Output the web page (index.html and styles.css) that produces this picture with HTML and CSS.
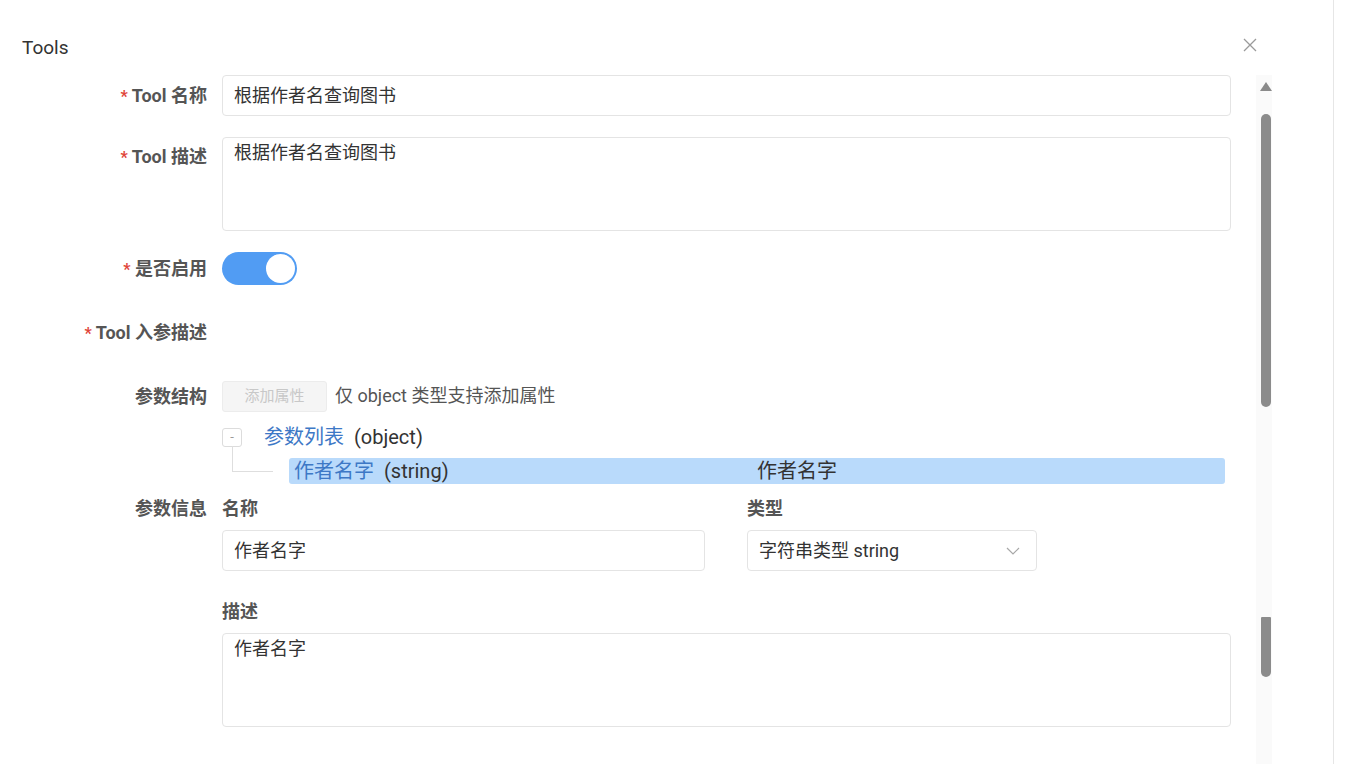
FILE: index.html
```html
<!DOCTYPE html>
<html lang="zh">
<head>
<meta charset="utf-8">
<title>Tools</title>
<link rel="stylesheet" href="styles.css">
</head>
<body>
<div class="modal">
  <header class="head">
    <span class="title">Tools</span>
    <span class="close">
      <svg width="14" height="14" viewBox="0 0 14 14"><path d="M1 1L13 13M13 1L1 13" stroke="#9a9a9a" stroke-width="1.3" fill="none"/></svg>
    </span>
  </header>
  <div class="body">
    <div class="form">
      <div class="row r-name">
        <div class="label lh41"><span class="req">*</span> Tool 名称</div>
        <div class="ctrl"><div class="input">根据作者名查询图书</div></div>
      </div>
      <div class="row r-desc">
        <div class="label pt8"><span class="req">*</span> Tool 描述</div>
        <div class="ctrl"><div class="textarea">根据作者名查询图书</div></div>
      </div>
      <div class="row r-switch">
        <div class="label lh33"><span class="req">*</span> 是否启用</div>
        <div class="ctrl"><div class="switch"><span class="knob"></span></div></div>
      </div>
      <div class="row r-params">
        <div class="label lh24"><span class="req">*</span> Tool 入参描述</div>
        <div class="ctrl"></div>
      </div>
      <div class="row r-struct">
        <div class="label lh31">参数结构</div>
        <div class="ctrl struct">
          <span class="btn-disabled">添加属性</span>
          <span class="hint">仅 object 类型支持添加属性</span>
        </div>
      </div>
      <div class="row r-tree">
        <div class="label"></div>
        <div class="ctrl">
          <div class="tree-node">
            <span class="toggle">-</span>
            <span class="node-text"><span class="node-name">参数列表</span><span class="node-type">(object)</span></span>
          </div>
          <div class="tree-child">
            <div class="child-bar">
              <span class="child-left"><span class="node-name">作者名字</span><span class="node-type">(string)</span></span><span class="child-desc">作者名字</span>
            </div>
          </div>
        </div>
      </div>
      <div class="row r-info">
        <div class="label lh24">参数信息</div>
        <div class="ctrl">
          <div class="info-grid">
            <div class="sub-label">名称</div>
            <div class="sub-label">类型</div>
            <div class="input">作者名字</div>
            <div class="input select">
              <span>字符串类型 string</span>
              <svg width="14" height="8" viewBox="0 0 14 8"><path d="M1 1L7 7L13 1" stroke="#a8a8a8" stroke-width="1.2" fill="none"/></svg>
            </div>
          </div>
          <div class="sub-label desc-label">描述</div>
          <div class="textarea">作者名字</div>
        </div>
      </div>
    </div>
    <div class="scrollbar">
      <div class="arrow"></div>
      <div class="thumb"></div>
      <div class="thumb2"></div>
    </div>
  </div>
</div>
</body>
</html>
```

FILE: styles.css
```css
* { box-sizing: border-box; }
html, body { margin: 0; padding: 0; background: #fff; }
body {
  font-family: Roboto, "Noto Sans CJK SC", "Noto Sans", sans-serif;
  color: #333;
  overflow: hidden;
}
.modal {
  width: 1334px;
  height: 764px;
  border-right: 1px solid #e6e6e6;
  overflow: hidden;
}
.head {
  height: 75px;
  display: flex;
  justify-content: space-between;
  align-items: flex-start;
  padding: 36px 0 0 22px;
}
.title {
  font-size: 19px;
  line-height: 24px;
  color: #333;
}
.close {
  width: 14px;
  height: 14px;
  margin-top: 2px;
  margin-right: 76px;
  display: block;
}
.close svg { display: block; }
.body {
  display: flex;
  align-items: flex-start;
}
.form { width: 1231px; }
.row { display: flex; align-items: flex-start; }
.label {
  width: 222px;
  flex: none;
  padding-right: 15px;
  text-align: right;
  font-size: 18px;
  font-weight: 700;
  color: #555;
  white-space: nowrap;
  overflow: visible;
}
.req { color: #e0453a; font-size: 16px; font-weight: 700; }
.lh41 { line-height: 41px; height: 41px; }
.lh33 { line-height: 33px; height: 33px; }
.lh31 { line-height: 31px; height: 31px; }
.lh24 { line-height: 24px; height: 24px; }
.pt8 { padding-top: 8px; line-height: 24px; }
.ctrl { flex: 1; min-width: 0; }

.r-name { height: 41px; }
.r-desc { height: 94px; margin-top: 21px; }
.r-switch { height: 33px; margin-top: 21px; }
.r-params { height: 24px; margin-top: 36px; }
.r-struct { height: 31px; margin-top: 36px; }

.input {
  height: 41px;
  border: 1px solid #e4e4e4;
  border-radius: 4px;
  padding: 0 11px;
  font-size: 18px;
  line-height: 39px;
  color: #333;
  background: #fff;
  overflow: hidden;
  white-space: nowrap;
}
.textarea {
  height: 94px;
  border: 1px solid #e4e4e4;
  border-radius: 4px;
  padding: 2px 11px;
  font-size: 18px;
  line-height: 26px;
  color: #333;
}
.switch {
  width: 75px;
  height: 33px;
  border-radius: 17px;
  background: #519cf3;
  display: flex;
  justify-content: flex-end;
  align-items: center;
  padding: 2px;
}
.knob {
  width: 29px;
  height: 29px;
  border-radius: 50%;
  background: #fff;
}
.struct { display: flex; align-items: center; height: 31px; }
.btn-disabled {
  width: 105px;
  height: 31px;
  border: 1px solid #ececec;
  border-radius: 3px;
  background: #f5f5f5;
  color: #c8c8c8;
  font-size: 15px;
  line-height: 29px;
  text-align: center;
}
.hint {
  margin-left: 8px;
  font-size: 18px;
  line-height: 24px;
  height: 24px;
  margin-top: -2px;
  color: #555;
}
.r-tree { margin-top: 12px; }
.tree-node {
  height: 26px;
  display: flex;
  align-items: center;
}
.toggle {
  width: 20px;
  height: 19px;
  border: 1px solid #dcdcdc;
  border-radius: 3px;
  color: #999;
  font-size: 13px;
  line-height: 16px;
  text-align: center;
  margin-right: 22px;
  flex: none;
}
.node-text, .child-left, .child-desc {
  font-size: 20px;
  line-height: 26px;
  height: 26px;
  white-space: nowrap;
}
.node-name { color: #3d78c6; }
.node-type { color: #333; margin-left: 10px; }
.tree-child {
  position: relative;
  margin-top: 8px;
  padding-left: 67px;
}
.tree-child::before {
  content: "";
  position: absolute;
  left: 10px;
  top: -12px;
  width: 40px;
  height: 25px;
  border-left: 1px solid #dedede;
  border-bottom: 1px solid #dedede;
}
.child-bar {
  height: 26px;
  width: 936px;
  background: #b9dafb;
  border-radius: 3px;
  display: flex;
  align-items: flex-start;
  padding-left: 5px;
}
.child-left { width: 463px; display: block; }
.child-desc { color: #333; display: block; }
.r-info { margin-top: 13px; }
.info-grid {
  display: grid;
  grid-template-columns: 483px 290px;
  grid-template-rows: 24px 41px;
  column-gap: 42px;
  row-gap: 9px;
}
.sub-label {
  font-size: 18px;
  font-weight: 700;
  color: #555;
  line-height: 24px;
  height: 24px;
}
.select {
  display: flex;
  justify-content: space-between;
  align-items: center;
  padding-right: 16px;
}
.select svg { display: block; }
.desc-label { margin-top: 29px; margin-bottom: 9px; }

.scrollbar {
  width: 16px;
  margin-left: 25px;
  height: 689px;
  background: #fafafa;
  display: flex;
  flex-direction: column;
  align-items: center;
  padding-top: 7px;
}
.arrow {
  width: 0;
  height: 0;
  border-left: 6px solid transparent;
  border-right: 6px solid transparent;
  border-bottom: 9px solid #8a8a8a;
  margin-left: 4px;
}
.thumb {
  width: 10px;
  height: 293px;
  margin-top: 23px;
  margin-left: 4px;
  border-radius: 5px;
  background: #8b8b8b;
}
.thumb2 {
  width: 10px;
  height: 60px;
  margin-top: 210px;
  margin-left: 4px;
  border-radius: 1px 1px 5px 5px;
  background: #8b8b8b;
}
```
